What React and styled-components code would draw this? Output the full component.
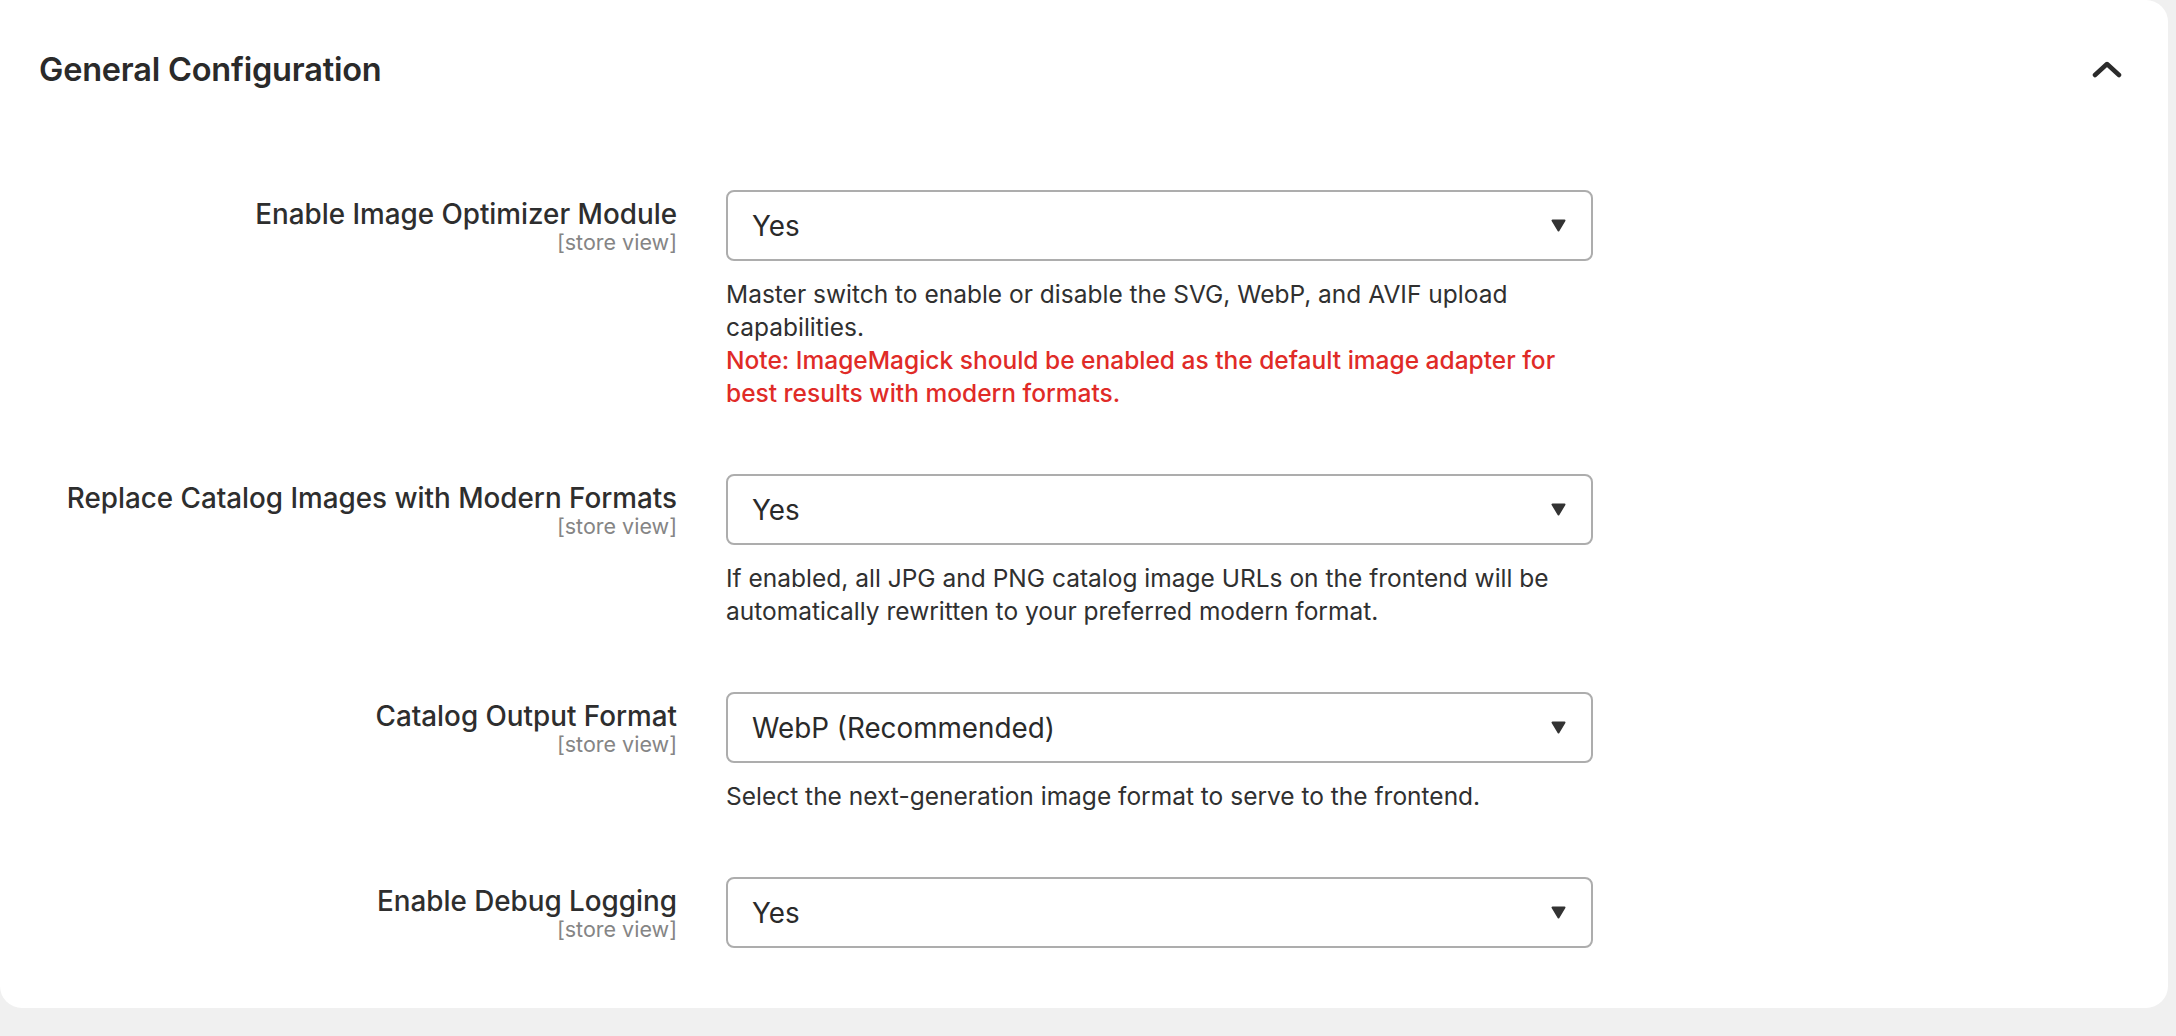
import React from "react";
import styled, { createGlobalStyle } from "styled-components";

const GlobalStyle = createGlobalStyle`
    html, body {
        margin: 0;
        padding: 0;
        background: #f0f0f0;
        font-family: Inter, "Noto Sans", "Liberation Sans", sans-serif;
        color: #303030;
    }
`;

const fields = [
    {
        id: "enable",
        label: "Enable Image Optimizer Module",
        value: "Yes",
        help: "Master switch to enable or disable the SVG, WebP, and AVIF upload capabilities.",
        note: "Note: ImageMagick should be enabled as the default image adapter for best results with modern formats.",
    },
    {
        id: "replace",
        label: "Replace Catalog Images with Modern Formats",
        value: "Yes",
        help: "If enabled, all JPG and PNG catalog image URLs on the frontend will be automatically rewritten to your preferred modern format.",
    },
    {
        id: "format",
        label: "Catalog Output Format",
        value: "WebP (Recommended)",
        help: "Select the next-generation image format to serve to the frontend.",
    },
    {
        id: "debug",
        label: "Enable Debug Logging",
        value: "Yes",
    },
];

const ChevronUp = () => (
    <svg width="30" height="20" viewBox="0 0 30 20" fill="none">
        <path
            d="M3 16 L15 5 L27 16"
            stroke="#2b2b2b"
            strokeWidth="4.5"
            strokeLinecap="round"
            strokeLinejoin="round"
        />
    </svg>
);

const Caret = () => (
    <svg width="15" height="13" viewBox="0 0 15 13">
        <path
            d="M1.5 1.5 H13.5 L7.5 11.5 Z"
            fill="#333"
            stroke="#333"
            strokeWidth="2"
            strokeLinejoin="round"
        />
    </svg>
);

const App = () => {
    return (
        <>
            <GlobalStyle />
            <Page>
                <Card>
                    <Header>
                        <Title>General Configuration</Title>
                        <Toggle type="button" aria-label="Collapse section">
                            <ChevronUp />
                        </Toggle>
                    </Header>
                    <Fields>
                        {fields.map((f) => (
                            <Row key={f.id}>
                                <LabelCol>
                                    <Label>{f.label}</Label>
                                    <Scope>[store view]</Scope>
                                </LabelCol>
                                <Control>
                                    <Select>
                                        <span>{f.value}</span>
                                        <Caret />
                                    </Select>
                                    {f.help && (
                                        <Help>
                                            {f.help}
                                            {f.note && <Note>{f.note}</Note>}
                                        </Help>
                                    )}
                                </Control>
                            </Row>
                        ))}
                    </Fields>
                </Card>
            </Page>
        </>
    );
};

export default App;

const Page = styled.div`
    min-height: 1036px;
    padding: 0 8px 0 0;
    box-sizing: border-box;
    overflow: hidden;
`;

const Card = styled.section`
    background: #fff;
    border-radius: 0 22px 22px 22px;
    padding: 50px 0 60px 0;
`;

const Header = styled.div`
    display: flex;
    align-items: center;
    justify-content: space-between;
    padding: 0 46px 0 39px;
    height: 38px;
`;

const Title = styled.h2`
    margin: 0;
    font-size: 32.5px;
    font-weight: 600;
    color: #2a2a2a;
    letter-spacing: -0.2px;
`;

const Toggle = styled.button`
    border: 0;
    background: none;
    padding: 0;
    display: flex;
    cursor: pointer;
`;

const Fields = styled.div`
    display: flex;
    flex-direction: column;
    gap: 64px;
    padding-top: 102px;
`;

const Row = styled.div`
    display: grid;
    grid-template-columns: 677px 867px;
    column-gap: 49px;
    align-items: start;
`;

const LabelCol = styled.div`
    display: flex;
    flex-direction: column;
    align-items: flex-end;
    text-align: right;
    padding-top: 8px;
`;

const Label = styled.div`
    font-size: 27.8px;
    font-weight: 500;
    line-height: 32px;
    color: #2e2e2e;
`;

const Scope = styled.div`
    font-size: 21.5px;
    line-height: 25px;
    color: #858585;
`;

const Control = styled.div`
    display: flex;
    flex-direction: column;
`;

const Select = styled.div`
    height: 71px;
    box-sizing: border-box;
    border: 2px solid #adadad;
    border-radius: 8px;
    display: flex;
    align-items: center;
    justify-content: space-between;
    padding: 0 25px 0 24px;
    font-size: 27.8px;
    color: #2a2a2a;
`;

const Help = styled.div`
    margin-top: 17px;
    font-size: 24.5px;
    line-height: 33px;
    color: #303030;
`;

const Note = styled.div`
    color: #e02b27;
    font-weight: 500;
`;
